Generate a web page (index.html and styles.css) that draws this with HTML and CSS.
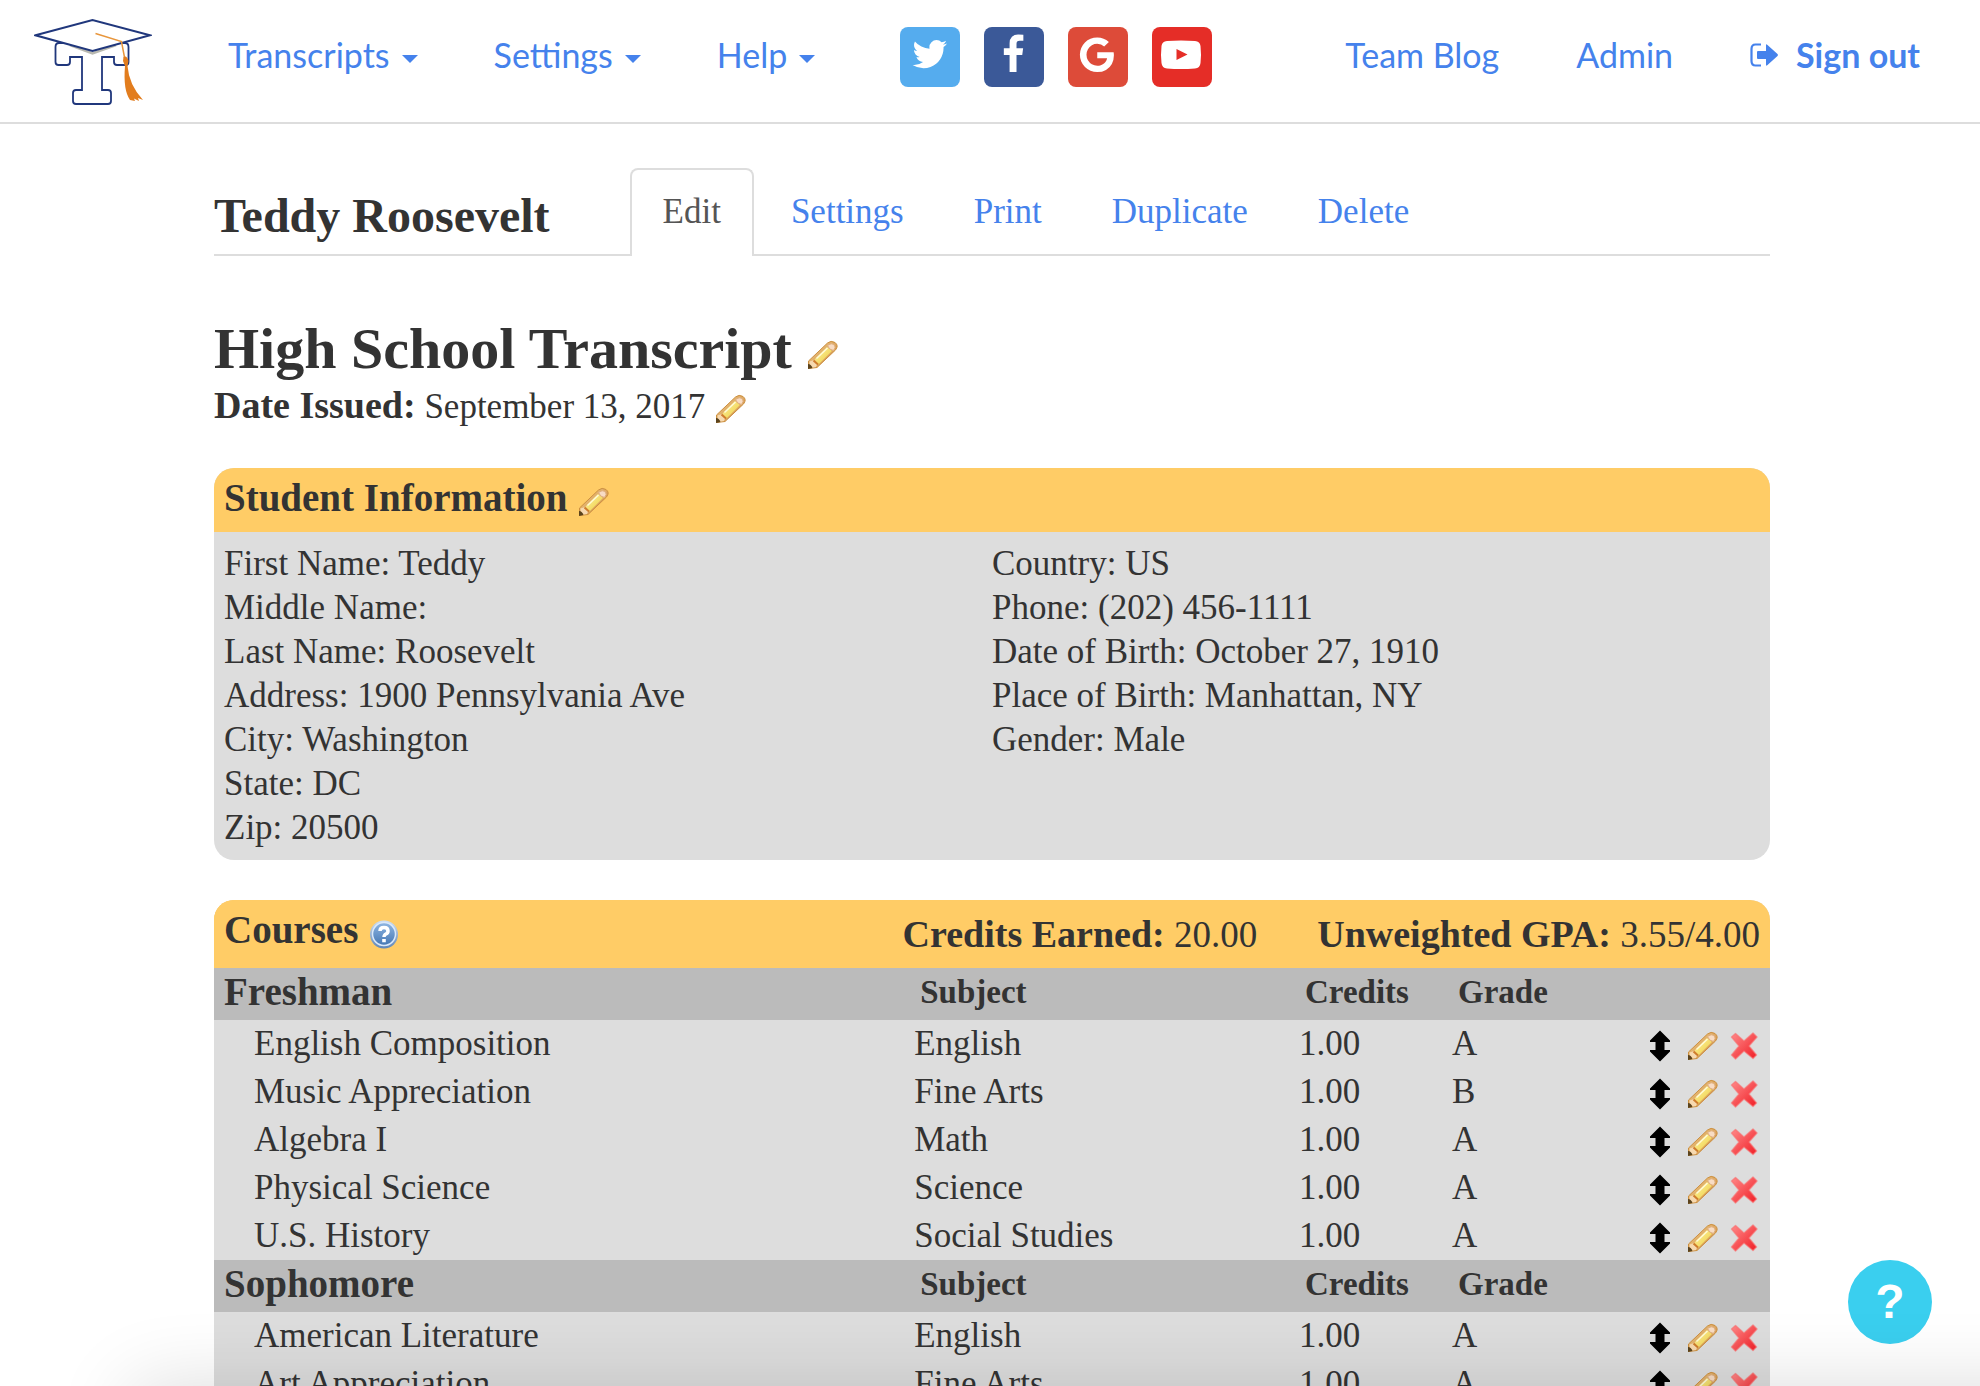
FILE: index.html
```html
<!DOCTYPE html>
<html lang="en">
<head>
<meta charset="utf-8">
<title>Teddy Roosevelt - Edit Transcript</title>
<link rel="stylesheet" href="styles.css">
</head>
<body>
<svg class="sprite" aria-hidden="true">
  <defs>
    <linearGradient id="wood" x1="0" y1="0" x2="1" y2="1"><stop offset="0" stop-color="#f3d28e"/><stop offset="1" stop-color="#c9803a"/></linearGradient>
    <linearGradient id="lead" x1="0" y1="0" x2="1" y2="1"><stop offset="0" stop-color="#fff6a8"/><stop offset="1" stop-color="#ecc93a"/></linearGradient>
    <linearGradient id="red" x1="0" y1="0" x2="1" y2="1"><stop offset="0" stop-color="#ff8a8a"/><stop offset="1" stop-color="#f01c24"/></linearGradient>
    <linearGradient id="blue" x1="0" y1="0" x2="0" y2="1"><stop offset="0" stop-color="#8fb6e2"/><stop offset="1" stop-color="#4577b4"/></linearGradient>
    <linearGradient id="rim" x1="0" y1="0" x2="0" y2="1"><stop offset="0" stop-color="#cfe0f5"/><stop offset="1" stop-color="#5f86b8"/></linearGradient>
  </defs>
  <symbol id="pencil" viewBox="0 0 32 32">
    <path d="M2.500 29.500V22L21.500 4Q25 1 29 3.500Q33 6.500 29.500 11L11 28.500Z" fill="url(#wood)" stroke="#cc9040" stroke-width="1"/>
    <path d="M3.500 22.500L8 21L11.500 24.500L10 28L4 29Z" fill="#f7d9b0"/>
    <path d="M2 30V25Q5 25 6.500 29Z" fill="#5b431c"/>
    <path d="M8.500 20.500L21 8L26 12L12.500 25.500Z" fill="url(#lead)"/>
    <path d="M10.500 19.500L21.500 9" stroke="#fffbd8" stroke-width="1.500"/>
    <path d="M21.500 6.500Q25.500 3.500 28 5.500Q30.500 8 27.500 11.500Q23 11 21.500 6.500Z" fill="#f8dcc4" stroke="#e0b080" stroke-width="1"/>
    <path d="M7.500 21.500L12 25.500" stroke="#cf7d2c" stroke-width="2"/>
  </symbol>
  <symbol id="move" viewBox="0 0 32 32">
    <path d="M16 .5L26 10.500V12H20.500V20H26V21.500L16 31.500L6 21.500V20H11.500V12H6V10.500Z"/>
  </symbol>
  <symbol id="remove" viewBox="0 0 32 32">
    <path d="M3.500 7L7.500 3.500L16 11L25 3L29 7L21 16L28.500 25L25 28.500L16 21L7.500 29L3.500 25L11 16Z" fill="url(#red)" stroke="#fa6a6a" stroke-opacity=".6" stroke-width="1.500" stroke-linejoin="round"/>
  </symbol>
  <symbol id="help" viewBox="0 0 32 32">
    <circle cx="16" cy="16.500" r="14" fill="url(#rim)"/>
    <circle cx="16" cy="16" r="11.500" fill="url(#blue)" stroke="#dbe9fa" stroke-width="1.500"/>
    <path d="M12 13Q12 9.500 16 9.500T20 13Q20 15 18 16T16 19" fill="none" stroke="#fff" stroke-width="3.500"/>
    <path d="M14.200 21h3.600v3.200h-3.600Z" fill="#fff"/>
  </symbol>
</svg>

<header class="topbar">
  <a href="#" class="logo" aria-label="Transcript home">
    <svg width="118" height="110" viewBox="34 0 118 110">
      <path d="M59 43H125Q128.500 43 128.500 47V62Q128.500 65 125.500 65H117Q114 65 114 62V57H102V90H108Q111 90 111 93V101Q111 104 108 104H76Q73 104 73 101V93Q73 90 76 90H82V57H70V62Q70 65 67 65H58.500Q55.500 65 55.500 62V47Q55.500 43 59 43Z" fill="#fff" stroke="#20377c" stroke-width="1.800"/>
      <path d="M70 45L92.500 53.500L116 45" fill="none" stroke="#b9b9b0" stroke-width="2.500"/>
      <path d="M35.500 35.300L92.500 20L150 35.300L92.500 51Z" fill="#fff" stroke="#20377c" stroke-width="2"/>
      <path d="M95.500 33.500L121.500 41.500L125 60" fill="none" stroke="#e8963c" stroke-width="1.500"/>
      <path d="M123.500 57Q127 55 128.500 61L127.500 66Q129 85 143 100L138 98L139 101L134 98.500L135 101L130 100Q123 90 125 66L123 61Z" fill="#e27d1e"/>
    </svg>
  </a>
  <nav class="menu" aria-label="Main">
    <button type="button" class="menu-item">Transcripts<span class="caret"></span></button>
    <button type="button" class="menu-item">Settings<span class="caret"></span></button>
    <button type="button" class="menu-item">Help<span class="caret"></span></button>
  </nav>
  <div class="social">
    <a href="#" class="tile twitter" aria-label="Twitter"><svg viewBox="0 0 60 60"><path transform="translate(10.200 7.500) scale(.0219)" d="M1684 408q-67 98-162 167 1 14 1 42 0 130-38 259.500t-115.500 248.500-184.500 210.500-258 146-323 54.500q-271 0-496-145 35 4 78 4 225 0 401-138-105-2-188-64.500t-114-159.500q33 5 61 5 43 0 85-11-112-23-185.500-111.500t-73.500-205.500v-4q68 38 146 41-66-44-105-115t-39-154q0-88 44-163 121 149 294.500 238.500t371.500 99.500q-8-38-8-74 0-134 94.500-228.500t228.500-94.500q140 0 236 102 109-21 205-78-37 115-142 178 93-10 186-50z"/></svg></a>
    <a href="#" class="tile facebook" aria-label="Facebook"><svg viewBox="0 0 60 60"><path transform="translate(9 7.500) scale(.0226)" d="M1343 12v264h-157q-86 0-116 36t-30 108v189h293l-39 296h-254v759h-306v-759h-255v-296h255v-218q0-186 104-288.500t277-102.500q147 0 228 12z"/></svg></a>
    <a href="#" class="tile google" aria-label="Google"><svg viewBox="0 0 60 60"><path transform="translate(9 7.500) scale(.0226)" d="M896 786h725q12 67 12 128 0 217-91 387.500t-259.500 266.500-386.500 96q-157 0-299-60.500t-245-163.500-163.500-245-60.500-299 60.500-299 163.500-245 245-163.500 299-60.500q300 0 515 201l-209 201q-123-119-306-119-129 0-238.500 65t-173.500 176.500-64 243.500 64 243.500 173.500 176.500 238.500 65q87 0 160-24t120-60 82-82 51.500-87 22.500-78h-436v-264z"/></svg></a>
    <a href="#" class="tile youtube" aria-label="YouTube"><svg viewBox="0 0 60 60"><path fill-rule="evenodd" d="M15 14Q29 13 43 14Q48 14.500 48.500 19Q49.500 28 48.500 36Q48 41 43 41.500Q29 42.500 15 41.500Q10 41 9.500 36Q8.500 28 9.500 19Q10 14.500 15 14ZM24.500 22V33L35.500 27.500Z"/></svg></a>
  </div>
  <nav class="account" aria-label="Account">
    <a href="#">Team Blog</a>
    <a href="#">Admin</a>
    <a href="#" class="signout"><svg width="28" height="24" viewBox="0 0 28 24" aria-hidden="true"><path d="M11 1.500H5.500Q1.500 1.500 1.500 6V18Q1.500 22.500 5.500 22.500H11" fill="none" stroke="currentColor" stroke-width="2.200"/><path d="M8 8H16V2.500Q16 .5 17.500 2L27.500 11Q28.300 12 27.500 13L17.500 22Q16 23.500 16 21.500V16H8Q7 16 7 15V9Q7 8 8 8Z" fill="currentColor"/></svg>Sign out</a>
  </nav>
</header>

<main class="page">
  <div class="tabbar">
    <h2 class="student">Teddy Roosevelt</h2>
    <nav class="tabs" aria-label="Transcript">
      <a href="#" class="tab active" aria-current="page">Edit</a>
      <a href="#" class="tab">Settings</a>
      <a href="#" class="tab">Print</a>
      <a href="#" class="tab">Duplicate</a>
      <a href="#" class="tab">Delete</a>
    </nav>
  </div>

  <h1 class="title">High School Transcript <button type="button" class="icon" aria-label="Edit title"><svg><use href="#pencil"/></svg></button></h1>
  <p class="issued"><b>Date Issued:</b> September 13, 2017 <button type="button" class="icon" aria-label="Edit date"><svg><use href="#pencil"/></svg></button></p>

  <section class="panel">
    <h2 class="panel-title">Student Information <button type="button" class="icon" aria-label="Edit student information"><svg><use href="#pencil"/></svg></button></h2>
    <div class="info">
      <ul>
        <li>First Name: Teddy</li>
        <li>Middle Name:</li>
        <li>Last Name: Roosevelt</li>
        <li>Address: 1900 Pennsylvania Ave</li>
        <li>City: Washington</li>
        <li>State: DC</li>
        <li>Zip: 20500</li>
      </ul>
      <ul>
        <li>Country: US</li>
        <li>Phone: (202) 456-1111</li>
        <li>Date of Birth: October 27, 1910</li>
        <li>Place of Birth: Manhattan, NY</li>
        <li>Gender: Male</li>
      </ul>
    </div>
  </section>

  <section class="panel">
    <div class="courses-head">
      <h2 class="panel-title">Courses <button type="button" class="icon" aria-label="About courses"><svg><use href="#help"/></svg></button></h2>
      <p class="totals"><span><b>Credits Earned:</b> 20.00</span><span><b>Unweighted GPA:</b> 3.55/4.00</span></p>
    </div>
    <table class="courses">
      <colgroup><col class="c-name"><col><col class="c-credits"><col class="c-grade"></colgroup>
      <tbody id="courses"></tbody>
    </table>
  </section>
</main>

<button type="button" class="help-button" aria-label="Help">?</button>
<div class="bottom-shade"></div>
<script src="courses.js"></script>
</body>
</html>
```
FILE: styles.css
```css
* { box-sizing: border-box; }
body {
  margin: 0;
  height: 100vh;
  overflow: hidden;
  background: #fff;
  color: #333;
  font: 35px/44px "Liberation Serif", serif;
}
h1, h2, p, ul { margin: 0; padding: 0; }
ul { list-style: none; }
a { color: #4582ec; text-decoration: none; }
button { padding: 0; border: 0; background: none; font: inherit; color: inherit; cursor: pointer; }
.sprite { position: absolute; width: 0; height: 0; }

.icon { display: inline-block; width: 32px; height: 32px; vertical-align: -7px; line-height: 0; }
.icon svg { display: block; width: 32px; height: 32px; }

/* Top navigation */
.topbar {
  display: flex;
  align-items: center;
  height: 124px;
  padding: 0 60px 12px 34px;
  border-bottom: 2px solid #ddd;
  font: 34px/40px Lato, sans-serif;
  white-space: nowrap;
}
.logo svg { display: block; }
.menu { display: flex; gap: 76px; margin-left: 76px; color: #4582ec; }
.menu-item { display: flex; align-items: center; gap: 12px; }
.caret { margin-top: 8px; border: 8px solid transparent; border-top-color: currentColor; border-bottom: 0; }
.social { display: flex; gap: 24px; margin: 4px 0 0 85px; }
.tile { width: 60px; height: 60px; border-radius: 8px; fill: #fff; }
.tile svg { display: block; width: 60px; height: 60px; }
.twitter { background: #55acee; }
.facebook { background: #3b5998; }
.google { background: #dd4b39; }
.youtube { background: #e52d27; }
.account { display: flex; gap: 77px; margin-left: auto; }
.signout { display: flex; align-items: center; gap: 18px; font-weight: bold; }

/* Page */
.page { max-width: 1560px; margin: 0 auto; padding: 44px 0 0 4px; }
.tabbar { display: flex; gap: 80px; border-bottom: 2px solid #ddd; }
.student { padding-top: 22px; font-size: 48px; line-height: 52px; }
.tabs { display: flex; gap: 4px; margin-bottom: -2px; }
.tab { padding: 20px 31px 22px; border: 2px solid transparent; border-bottom: 0; line-height: 44px; }
.tab.active { border-color: #ddd; border-radius: 8px 8px 0 0; background: #fff; color: #555; }
.title { margin-top: 60px; font-size: 58px; line-height: 66px; }
.title .icon { vertical-align: -3px; }
.issued { line-height: 46px; }
.issued b { font-size: 38px; }

.panel { margin-top: 38px; border-radius: 20px; overflow: hidden; background: #ddd; }
.panel + .panel { margin-top: 40px; }
.panel-title { padding: 0 10px 4px; background: #fc6; font-size: 39px; line-height: 60px; }
.info { display: grid; grid-template-columns: 1fr 1fr; padding: 10px; }

.courses-head { display: flex; justify-content: space-between; height: 68px; background: #fc6; }
.totals { display: flex; gap: 60px; padding-right: 10px; font-size: 37px; line-height: 68px; }
.totals b { font-size: 38px; }
.courses { width: 100%; table-layout: fixed; border-collapse: collapse; text-align: left; }
.c-name { width: 45%; }
.c-credits { width: 153px; }
.c-grade { width: 318px; }
.courses th, .courses td { padding: 0; vertical-align: top; }
.courses .year th { height: 52px; padding: 0 0 4px 6px; background: #bbb; font-size: 33px; line-height: 48px; }
.courses .year th:first-child { padding-left: 10px; font-size: 39px; }
.courses td { height: 48px; line-height: 48px; }
.courses td:first-child { padding-left: 40px; }
.grade { display: flex; justify-content: space-between; height: 48px; }
.actions { display: flex; gap: 10px; padding: 10px 10px 0 0; }

.help-button {
  position: fixed;
  right: 48px;
  bottom: 42px;
  width: 84px;
  height: 84px;
  border-radius: 50%;
  background: #3acfef;
  color: #fff;
  font: bold 48px/84px "Liberation Sans", sans-serif;
}
.bottom-shade {
  position: fixed;
  top: 100%;
  left: 132px;
  right: -120px;
  height: 200px;
  box-shadow: 0 0 80px rgba(0, 0, 0, .14);
}
```
FILE: courses.js
```js
const years = [
  ["Freshman", [
    ["English Composition", "English", "1.00", "A"],
    ["Music Appreciation", "Fine Arts", "1.00", "B"],
    ["Algebra I", "Math", "1.00", "A"],
    ["Physical Science", "Science", "1.00", "A"],
    ["U.S. History", "Social Studies", "1.00", "A"]
  ]],
  ["Sophomore", [
    ["American Literature", "English", "1.00", "A"],
    ["Art Appreciation", "Fine Arts", "1.00", "A"]
  ]]
];

const action = (label, icon) =>
  `<button type="button" class="icon" aria-label="${label}"><svg><use href="#${icon}"/></svg></button>`;

const actions = `<div class="actions">${action("Move", "move")}${action("Edit", "pencil")}${action("Delete", "remove")}</div>`;

document.getElementById("courses").innerHTML = years.map(([year, courses]) =>
  `<tr class="year"><th>${year}</th><th>Subject</th><th>Credits</th><th>Grade</th></tr>` +
  courses.map(([name, subject, credits, grade]) =>
    `<tr><td>${name}</td><td>${subject}</td><td>${credits}</td><td><div class="grade">${grade}${actions}</div></td></tr>`
  ).join("")
).join("");
```
